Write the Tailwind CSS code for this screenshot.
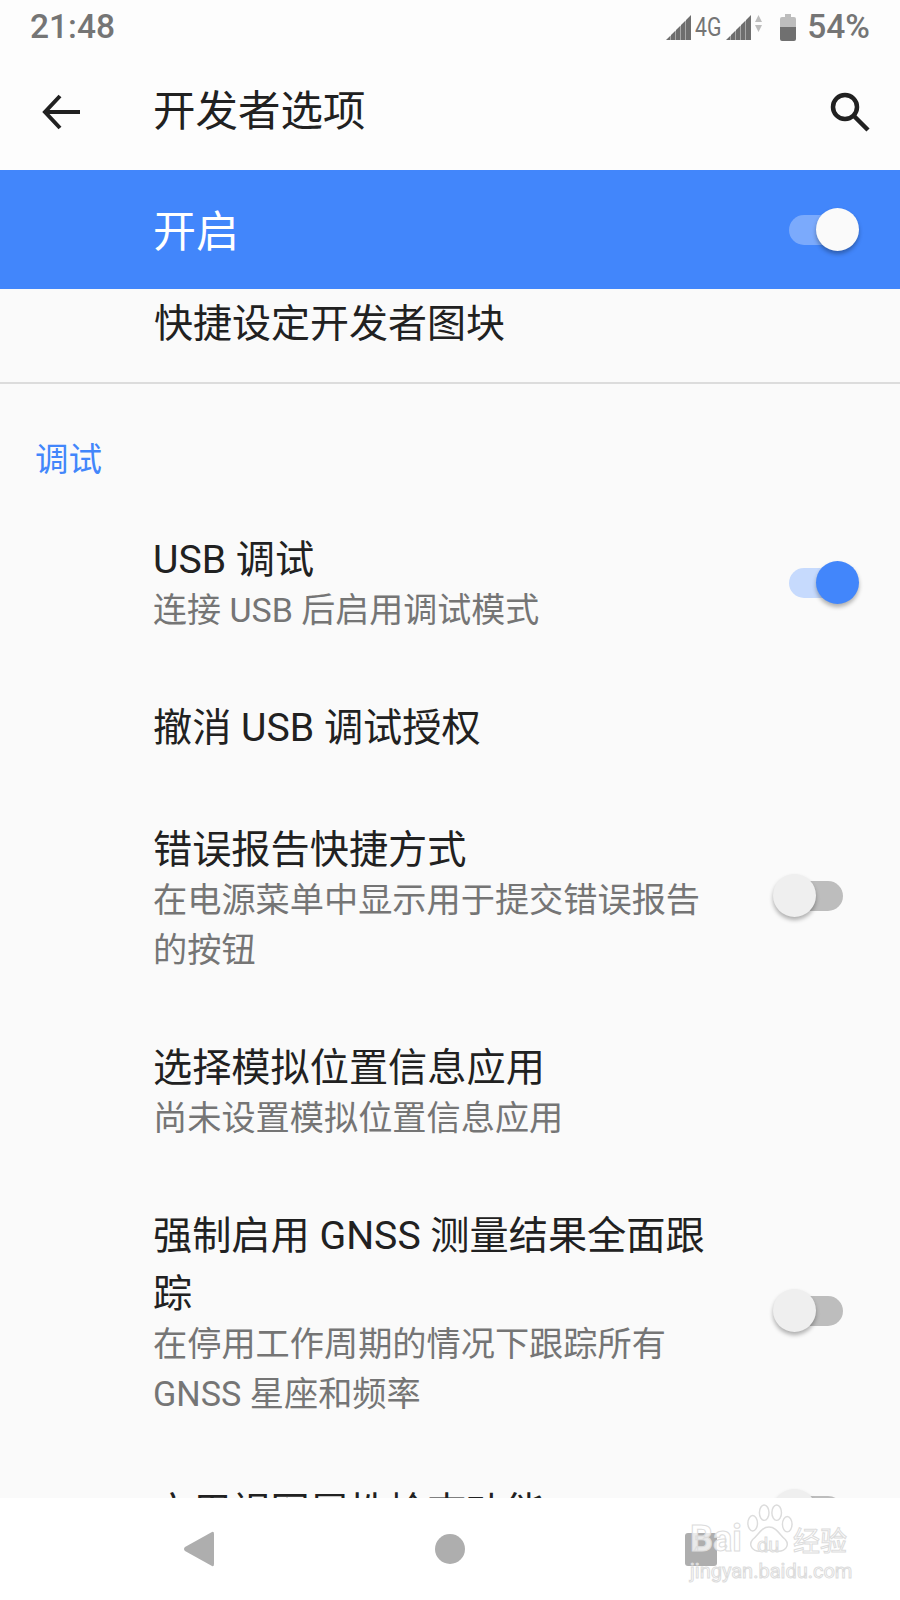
<!DOCTYPE html>
<html>

<head>
    <title>开发者选项</title>
    <script src="https://cdn.jsdelivr.net/npm/@tailwindcss/browser@4"></script>
</head>

<body class="font-['Roboto','Noto_Sans_CJK_SC',sans-serif]">
    <div class="relative flex flex-col w-[900px] h-[1600px] overflow-hidden bg-[#fafafa] text-[#212121]">
        <!-- status bar -->
        <div class="flex items-center justify-between h-[54px] pl-[30px] pr-[30px] bg-[#fdfdfd] text-[#757575]">
            <span class="text-[33.5px] font-medium">21:48</span>
            <div class="flex items-center">
                <svg class="w-[25px] h-[25px]" viewBox="0 0 25 25" fill="#6e6e6e">
                    <path d="M0 25 L4.6 20.4 V25 Z M5 20 L9.6 15.4 V25 H5 Z M10 15 L14.6 10.4 V25 H10 Z M15 10 L19.6 5.4 V25 H15 Z M20 5 L25 0 V25 H20 Z"></path>
                </svg>
                <span class="ml-[4px] w-[26px] text-[25px] leading-none scale-x-[0.85] origin-left whitespace-nowrap">4G</span>
                <svg class="ml-[5px] w-[25px] h-[25px]" viewBox="0 0 25 25" fill="#6e6e6e">
                    <path d="M0 25 L4.6 20.4 V25 Z M5 20 L9.6 15.4 V25 H5 Z M10 15 L14.6 10.4 V25 H10 Z M15 10 L19.6 5.4 V25 H15 Z M20 5 L25 0 V25 H20 Z"></path>
                </svg>
                <svg class="ml-[4px] mb-[8px] w-[7px] h-[17px]" viewBox="0 0 7 17" fill="#bdbdbd">
                    <path d="M3.5 0 L7 7 H0 Z M0 10 H7 L3.5 17 Z"></path>
                </svg>
                <svg class="ml-[18px] w-[16px] h-[27px]" viewBox="0 0 16 27">
                    <path fill="#bdbdbd" d="M5 0 H11 V3 H14 Q16 3 16 5 V13 H0 V5 Q0 3 2 3 H5 Z"></path>
                    <path fill="#707070" d="M0 13 H16 V25 Q16 27 14 27 H2 Q0 27 0 25 Z"></path>
                </svg>
                <span class="ml-[11px] text-[33.5px] font-medium">54%</span>
            </div>
        </div>
        <!-- toolbar -->
        <div class="flex items-center justify-between h-[116px] pl-[42px] pr-[30px] bg-[#fdfdfd]">
            <div class="flex items-center">
                <svg class="w-[38px] h-[38px]" viewBox="0 0 38 38" fill="none" stroke="#212121" stroke-width="4">
                    <path d="M38 19 H3 M18 3 L3 19 L18 35"></path>
                </svg>
                <span class="ml-[73px] text-[42.5px] leading-none">开发者选项</span>
            </div>
            <svg class="w-[40px] h-[40px]" viewBox="0 0 40 40" fill="none" stroke="#212121" stroke-width="4.5">
                <circle cx="15" cy="15" r="12"></circle>
                <path d="M23 23 L38 38"></path>
            </svg>
        </div>
        <!-- master switch -->
        <div class="flex items-center justify-between h-[119px] pl-[153px] pr-[41px] bg-[#4286fb] text-white">
            <span class="pt-[5px] text-[43px] leading-none">开启</span>
            <div class="relative w-[70px] h-[44px]">
                <div class="absolute left-0 top-[7px] w-[60px] h-[30px] rounded-full bg-white/30"></div>
                <div class="absolute right-0 top-0 w-[43px] h-[43px] rounded-full bg-[#fafafa] shadow-[0_3px_4px_rgba(0,0,0,0.3)]"></div>
            </div>
        </div>
        <!-- list -->
        <div class="flex-1 min-h-0 overflow-hidden">
            <div class="flex items-center h-[95px] pb-[26px] pt-[4px] pl-[154px] border-b-2 border-[#dcdcdc]">
                <span class="text-[39px] leading-none">快捷设定开发者图块</span>
            </div>
            <div class="pt-[58px] pl-[35px] h-[115px] text-[33.5px] leading-[36px] text-[#4286fb]">调试</div>

            <div class="flex items-center justify-between py-[32px] pl-[153px] pr-[41px]">
                <div>
                    <div class="text-[39.2px] leading-[58px]">USB 调试</div>
                    <div class="-mt-[4px] text-[34px] leading-[50px] text-[#757575]">连接 USB 后启用调试模式</div>
                </div>
                <div class="relative w-[70px] h-[44px]">
                    <div class="absolute left-0 top-[7px] w-[60px] h-[30px] rounded-full bg-[#c6dafd]"></div>
                    <div class="absolute right-0 top-0 w-[43px] h-[43px] rounded-full bg-[#4286fb] shadow-[0_3px_4px_rgba(0,0,0,0.3)]"></div>
                </div>
            </div>

            <div class="py-[32px] pl-[153px] text-[39.2px] leading-[58px]">撤消 USB 调试授权</div>

            <div class="flex items-center justify-between py-[32px] pl-[153px] pr-[57px]">
                <div class="w-[560px]">
                    <div class="text-[39.2px] leading-[58px]">错误报告快捷方式</div>
                    <div class="-mt-[4px] text-[34.2px] leading-[50px] text-[#757575]">在电源菜单中显示用于提交错误报告的按钮</div>
                </div>
                <div class="relative mb-[4px] w-[70px] h-[44px]">
                    <div class="absolute right-0 top-[7px] w-[60px] h-[30px] rounded-full bg-[#bdbdbd]"></div>
                    <div class="absolute left-0 top-0 w-[43px] h-[43px] rounded-full bg-[#efefef] shadow-[0_3px_4px_rgba(0,0,0,0.3)]"></div>
                </div>
            </div>

            <div class="py-[32px] pl-[153px]">
                <div class="text-[39.2px] leading-[58px]">选择模拟位置信息应用</div>
                <div class="-mt-[4px] text-[34.2px] leading-[50px] text-[#757575]">尚未设置模拟位置信息应用</div>
            </div>

            <div class="flex items-center justify-between py-[32px] pl-[153px] pr-[57px]">
                <div class="w-[560px]">
                    <div class="text-[39.2px] leading-[58px]">强制启用 GNSS 测量结果全面跟踪</div>
                    <div class="-mt-[4px] text-[34.2px] leading-[50px] text-[#757575]">在停用工作周期的情况下跟踪所有 GNSS 星座和频率</div>
                </div>
                <div class="relative mb-[4px] w-[70px] h-[44px]">
                    <div class="absolute right-0 top-[7px] w-[60px] h-[30px] rounded-full bg-[#bdbdbd]"></div>
                    <div class="absolute left-0 top-0 w-[43px] h-[43px] rounded-full bg-[#efefef] shadow-[0_3px_4px_rgba(0,0,0,0.3)]"></div>
                </div>
            </div>

            <div class="flex items-start justify-between pt-[32px] pl-[153px] pr-[57px]">
                <div class="text-[39.2px] leading-[58px]">启用视图属性检查功能</div>
                <div class="relative mt-[6px] w-[70px] h-[44px]">
                    <div class="absolute right-0 top-[7px] w-[60px] h-[30px] rounded-full bg-[#bdbdbd]"></div>
                    <div class="absolute left-0 top-0 w-[43px] h-[43px] rounded-full bg-[#efefef] shadow-[0_3px_4px_rgba(0,0,0,0.3)]"></div>
                </div>
            </div>
        </div>
        <!-- nav bar -->
        <div class="flex items-center h-[102px] bg-white">
            <svg class="ml-[184px] w-[30px] h-[36px]" viewBox="0 0 30 36" fill="#aeaeae">
                <path d="M28 1 Q30 0 30 3 V33 Q30 36 28 35 L1 20 Q-1 18 1 16 Z"></path>
            </svg>
            <div class="ml-[221px] w-[30px] h-[30px] rounded-full bg-[#aeaeae]"></div>
            <div class="ml-[220px] w-[32px] h-[33px] rounded-[3px] bg-[#aeaeae]"></div>
        </div>
        <!-- watermark -->
        <div class="absolute left-[690px] top-[1500px] w-[170px] h-[90px]">
            <svg class="absolute left-[55px] top-[3px] w-[48px] h-[52px]" viewBox="0 0 50 52" fill="none" stroke="#dcdcdc" stroke-width="1.5">
                <ellipse cx="8" cy="20" rx="5" ry="8"></ellipse>
                <ellipse cx="20" cy="9" rx="5" ry="8"></ellipse>
                <ellipse cx="33" cy="9" rx="5" ry="8"></ellipse>
                <ellipse cx="44" cy="21" rx="5" ry="8"></ellipse>
                <path d="M25 24 C17 24 14 32 8 37 C3 43 8 50 17 49 C22 48 28 48 33 49 C42 50 47 43 42 37 C36 32 33 24 25 24 Z"></path>
            </svg>
            <span class="absolute left-0 top-[21px] text-[36px] leading-none font-bold text-white/75 [-webkit-text-stroke:1px_#dcdcdc]">Bai</span>
            <span class="absolute left-[67px] top-[35px] text-[20px] leading-none text-white/75 [-webkit-text-stroke:1px_#dcdcdc]">du</span>
            <span class="absolute left-[103px] top-[29px] text-[27px] leading-none text-white/75 [-webkit-text-stroke:1px_#dcdcdc]">经验</span>
            <span class="absolute left-0 top-[61px] text-[20px] leading-none text-white/75 [-webkit-text-stroke:1px_#dcdcdc]">jingyan.baidu.com</span>
        </div>
    </div>
</body>

</html>
